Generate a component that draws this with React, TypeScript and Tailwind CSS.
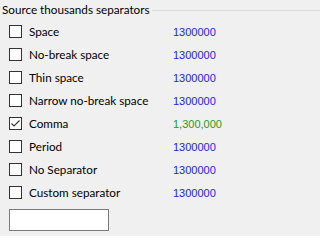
import React from 'react';

const rows = [
  { label: 'Space', value: '1300000', checked: false },
  { label: 'No-break space', value: '1300000', checked: false },
  { label: 'Thin space', value: '1300000', checked: false },
  { label: 'Narrow no-break space', value: '1300000', checked: false },
  { label: 'Comma', value: '1,300,000', checked: true },
  { label: 'Period', value: '1300000', checked: false },
  { label: 'No Separator', value: '1300000', checked: false },
  { label: 'Custom separator', value: '1300000', checked: false },
];

const CheckBox = ({ checked }: { checked: boolean }) => (
  <div className="w-[13px] h-[13px] border border-[#333333] bg-white flex items-center justify-center shrink-0">
    {checked && (
      <svg width="11" height="11" viewBox="0 0 11 11">
        <polyline points="1.5,5.5 4,8 9.5,2.5" fill="none" stroke="#333333" strokeWidth="1.1" />
      </svg>
    )}
  </div>
);

const App = () => {
  return (
    <div className="w-full min-w-[242px] h-[236px] bg-[#f0f0f0] overflow-hidden text-black font-['Lato',sans-serif] text-[11.7px]">
      <div className="flex items-center h-[20px] pl-[2px]">
        <span className="leading-none -mt-[1px]">Source thousands separators</span>
        <div className="flex-1 h-px bg-[#dcdcdc] ml-[2px] mt-[1px]" />
      </div>

      <div className="flex flex-col">
        {rows.map((row) => (
          <div key={row.label} className="flex items-center h-[23px] pl-[9px]">
            <CheckBox checked={row.checked} />
            <span className="ml-[7px] w-[144px] leading-none">{row.label}</span>
            <span
              className={
                'font-["Liberation_Sans",sans-serif] text-[11px] leading-none mt-[2px] ' +
                (row.checked ? 'text-[#2a9a1e]' : 'text-[#2323ee]')
              }
            >
              {row.value}
            </span>
          </div>
        ))}
      </div>

      <div className="ml-[9px] mt-[5px] w-[100px] h-[22px] bg-white border border-[#7a7a7a]" />
    </div>
  );
};

export default App;
